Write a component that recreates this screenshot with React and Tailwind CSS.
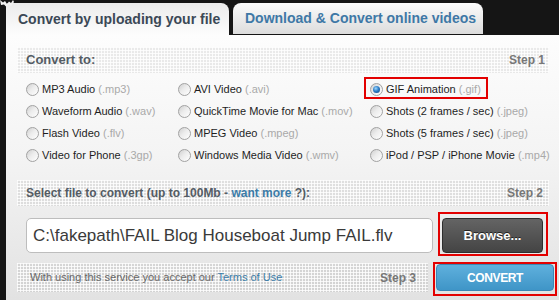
import React from "react";

const Radio = ({ checked }) => (
  <span className="w-[13px] h-[13px] rounded-full border border-[#a2a2a2] bg-[linear-gradient(135deg,#cfcfcf_0%,#ececec_45%,#ffffff_100%)] shrink-0 flex items-center justify-center">
    {checked && (
      <span className="w-[7px] h-[7px] rounded-full bg-[radial-gradient(circle_at_40%_35%,#9fd8ff_0%,#2f80c8_45%,#0e3f7c_100%)]" />
    )}
  </span>
);

const Opt = ({ label, ext, checked, boxed }) => (
  <div className="h-[22px] flex items-center">
    <div className="relative flex items-center gap-[3px] h-[16px]">
      <Radio checked={checked} />
      <span className="text-[11px] leading-[16px] text-[#1e1e1e] whitespace-nowrap">
        {label} <span className="text-[#a9a9a9]">({ext})</span>
      </span>
      {boxed && (
        <span className="absolute -left-[6px] -right-[7px] -top-[4px] -bottom-[2px] border-2 border-[#e30000]" />
      )}
    </div>
  </div>
);

const dotted =
  "bg-[linear-gradient(90deg,rgba(255,255,255,0.8)_1px,transparent_1px),linear-gradient(rgba(255,255,255,0.8)_1px,transparent_1px)] bg-[length:3px_3px] bg-[rgba(0,0,0,0.07)]";

export default function App() {
  const col1 = [
    ["MP3 Audio", ".mp3"],
    ["Waveform Audio", ".wav"],
    ["Flash Video", ".flv"],
    ["Video for Phone", ".3gp"],
  ];
  const col2 = [
    ["AVI Video", ".avi"],
    ["QuickTime Movie for Mac", ".mov"],
    ["MPEG Video", ".mpeg"],
    ["Windows Media Video", ".wmv"],
  ];
  const col3 = [
    ["GIF Animation", ".gif"],
    ["Shots (2 frames / sec)", ".jpeg"],
    ["Shots (5 frames / sec)", ".jpeg"],
    ["iPod / PSP / iPhone Movie", ".mp4"],
  ];

  return (
    <div
      className="relative w-[559px] h-[300px] overflow-hidden bg-[#151515]"
      style={{ fontFamily: '"Liberation Sans", Arial, sans-serif' }}
    >
      <svg className="absolute left-0 top-0" width="14" height="8" viewBox="0 0 14 8">
        <path d="M0 0 L3 2.5 L5 1 L7 4 L9 1.5 L11 3 L13 0 L14 2 L11 6.5 L8.5 4.5 L6.5 7 L4 4.5 L1 5 Z" fill="#f2f2f2" />
      </svg>

      {/* Tabs */}
      <div className="h-[35px] pl-[6px] pt-[3px] flex items-end gap-[4px]">
        <div className="w-[223px] h-[32px] rounded-tl-[3px] rounded-tr-[8px] bg-[linear-gradient(#ebebeb,#fdfdfd)] flex items-center pl-[12px]">
          <span className="text-[14px] font-bold text-[#3b4856] whitespace-nowrap">
            Convert by uploading your file
          </span>
        </div>
        <div className="w-[250px] h-[31px] rounded-t-[8px] bg-[linear-gradient(#fbfbfb,#dcdcdc)] flex items-center pl-[12px] mb-[1px]">
          <span className="text-[14px] font-bold text-[#3e78a6] whitespace-nowrap">
            Download &amp; Convert online videos
          </span>
        </div>
      </div>

      {/* Panel */}
      <div className="ml-[6px] h-[265px] bg-[linear-gradient(#fdfdfd,#f4f4f4_45%,#e2e2e2)] pl-[11px] pr-[5px] pt-[12px]">
        {/* Step 1 header */}
        <div className={`h-[26px] mr-[5px] flex items-center justify-between pl-[9px] pr-[4px] ${dotted}`}>
          <span className="text-[13px] font-bold text-[#545c64]">Convert to:</span>
          <span className="text-[12px] font-bold text-[#777]">Step 1</span>
        </div>

        {/* Options */}
        <div className="mt-[5px] pl-[9px] grid grid-cols-[152px_192px_1fr]">
          <div>
            {col1.map(([l, e]) => (
              <Opt key={l} label={l} ext={e} />
            ))}
          </div>
          <div>
            {col2.map(([l, e]) => (
              <Opt key={l} label={l} ext={e} />
            ))}
          </div>
          <div>
            {col3.map(([l, e], i) => (
              <Opt key={l} label={l} ext={e} checked={i === 0} boxed={i === 0} />
            ))}
          </div>
        </div>

        {/* Step 2 header */}
        <div className={`mt-[14px] h-[26px] mr-[5px] flex items-center justify-between pl-[9px] pr-[6px] ${dotted}`}>
          <span className="text-[12px] font-bold text-[#545c64] whitespace-nowrap">
            Select file to convert (up to 100Mb - <span className="text-[#3b7ca8]">want more</span> ?):
          </span>
          <span className="text-[12px] font-bold text-[#777]">Step 2</span>
        </div>

        {/* File input row */}
        <div className="mt-[12px] pl-[9px] flex items-center gap-[9px]">
          <div className="w-[407px] h-[35px] rounded-[5px] border border-[#bdbdbd] bg-white flex items-center pl-[6px]">
            <span className="text-[17px] text-[#3a3a3a] whitespace-nowrap">
              C:\fakepath\FAIL Blog Houseboat Jump FAIL.flv
            </span>
          </div>
          <div className="relative">
            <div className="w-[101px] h-[35px] rounded-[4px] border border-[#2e2e2e] bg-[linear-gradient(#646464,#444444)] flex items-center justify-center">
              <span className="text-[13px] font-bold text-white [text-shadow:0_-1px_0_#222]">Browse...</span>
            </div>
            <span className="absolute -left-[4px] -right-[5px] -top-[6px] -bottom-[3px] border-2 border-[#e30000]" />
          </div>
        </div>

        {/* Bottom row */}
        <div className="mt-[10px] flex items-center gap-[8px]">
          <div className={`w-[411px] h-[29px] flex items-center justify-between pl-[13px] pr-[12px] ${dotted}`}>
            <span className="text-[11px] text-[#666] whitespace-nowrap">
              With using this service you accept our <span className="text-[#3b7ca8]">Terms of Use</span>
            </span>
            <span className="text-[12px] font-bold text-[#777]">Step 3</span>
          </div>
          <div className="relative">
            <div className="w-[118px] h-[27px] rounded-[4px] border border-[#3b86b4] bg-[linear-gradient(#5fb0dd,#3f95c7)] flex items-center justify-center">
              <span className="text-[12px] font-bold text-white tracking-[-0.4px]">CONVERT</span>
            </div>
            <span className="absolute -left-[3px] -right-[3px] -top-[2px] -bottom-[5px] border-2 border-[#e30000]" />
          </div>
        </div>
      </div>
    </div>
  );
}
